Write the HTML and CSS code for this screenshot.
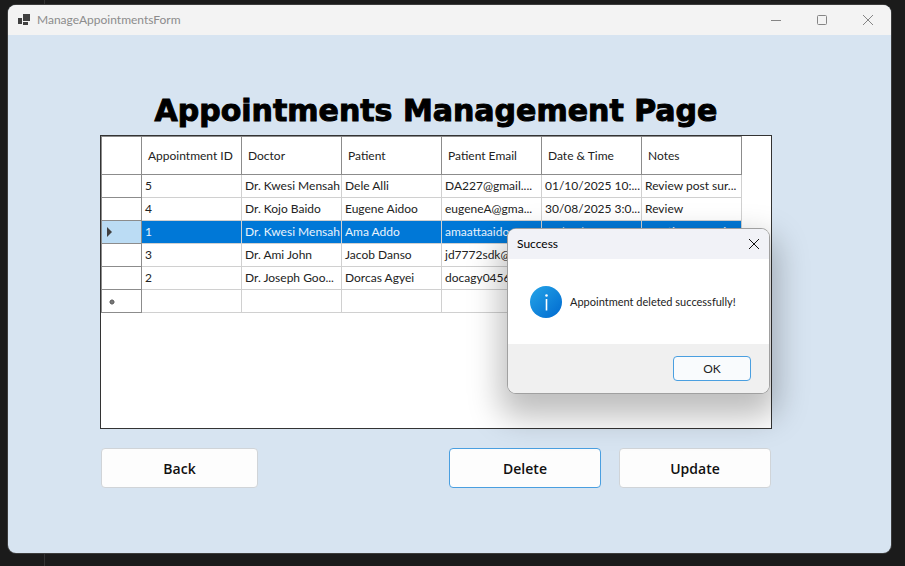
FILE: index.html
```html
<!DOCTYPE html>
<html lang="en">
<head>
<meta charset="utf-8">
<title>ManageAppointmentsForm</title>
<link rel="stylesheet" href="styles.css">
</head>
<body>
<div class="window">
  <header class="titlebar">
    <svg class="app-icon" viewBox="0 0 12 12" aria-hidden="true"><path d="M0 4h4v6H0zM5 0h7v7H5zM5 8h5v3H5z"/></svg>
    <span class="window-title">ManageAppointmentsForm</span>
    <div class="controls">
      <button class="control" aria-label="Minimize"><svg viewBox="0 0 12 12"><path d="M1 6.500h10"/></svg></button>
      <button class="control" aria-label="Maximize"><svg viewBox="0 0 12 12"><rect x="1.500" y="1.500" width="9" height="9" rx="1"/></svg></button>
      <button class="control" aria-label="Close"><svg viewBox="0 0 12 12"><path d="M1 1l10 10M11 1L1 11"/></svg></button>
    </div>
  </header>
  <main class="form">
    <h1 class="heading">Appointments Management Page</h1>
    <div class="grid-box">
      <table class="grid">
        <colgroup><col class="col-marker"><col class="col"><col class="col"><col class="col"><col class="col"><col class="col"><col class="col"></colgroup>
        <thead>
          <tr><td></td><th scope="col">Appointment ID</th><th scope="col">Doctor</th><th scope="col">Patient</th><th scope="col">Patient Email</th><th scope="col">Date &amp; Time</th><th scope="col">Notes</th></tr>
        </thead>
        <tbody>
          <tr><td></td><td>5</td><td>Dr. Kwesi Mensah</td><td>Dele Alli</td><td>DA227@gmail....</td><td>01/10/2025 10:...</td><td>Review post sur...</td></tr>
          <tr><td></td><td>4</td><td>Dr. Kojo Baido</td><td>Eugene Aidoo</td><td>eugeneA@gma...</td><td>30/08/2025 3:0...</td><td>Review</td></tr>
          <tr class="selected"><td><svg class="marker" viewBox="0 0 12 12" aria-hidden="true"><path d="M2 1l5 5-5 5z"/></svg></td><td>1</td><td>Dr. Kwesi Mensah</td><td>Ama Addo</td><td>amaattaaidoo...</td><td>26/08/2025 1:5...</td><td>Inpatient exami...</td></tr>
          <tr><td></td><td>3</td><td>Dr. Ami John</td><td>Jacob Danso</td><td>jd7772sdk@...</td><td></td><td></td></tr>
          <tr><td></td><td>2</td><td>Dr. Joseph Goo...</td><td>Dorcas Agyei</td><td>docagy0456...</td><td></td><td></td></tr>
          <tr><td><svg class="marker" viewBox="0 0 12 12" aria-hidden="true"><circle cx="7" cy="7" r="2"/><path class="rays" d="M7 4v6M4 7h6M5 5l4 4M9 5L5 9"/></svg></td><td></td><td></td><td></td><td></td><td></td><td></td></tr>
        </tbody>
      </table>
    </div>
    <div class="actions">
      <button class="action back">Back</button>
      <button class="action focused">Delete</button>
      <button class="action">Update</button>
    </div>
  </main>
  <section class="dialog" role="dialog" aria-labelledby="dialog-title">
    <header class="dialog-bar">
      <span id="dialog-title">Success</span>
      <button class="dialog-close" aria-label="Close"><svg viewBox="0 0 12 12"><path d="M1 1l10 10M11 1L1 11"/></svg></button>
    </header>
    <div class="dialog-body">
      <svg class="info" viewBox="0 0 32 32" aria-hidden="true">
        <defs><linearGradient id="blue" x1="0" y1="0" x2="1" y2="1"><stop offset="0" stop-color="#25a5e8"/><stop offset="1" stop-color="#0069cf"/></linearGradient></defs>
        <circle cx="16" cy="16" r="16" fill="url(#blue)"/>
        <circle cx="16.500" cy="9.500" r="1.300" fill="#fff"/><path d="M16.500 13v11.500" stroke="#fff" stroke-width="1.600"/>
      </svg>
      <p class="message">Appointment deleted successfully!</p>
    </div>
    <footer class="dialog-footer"><button class="ok">OK</button></footer>
  </section>
</div>
</body>
</html>
```
FILE: styles.css
```css
* { box-sizing: border-box; }
body {
  margin: 0;
  min-height: 100vh;
  display: flex;
  padding: 5px 14px 13px 8px;
  background: linear-gradient(#333, #333) 44px 0 / 1px 100% no-repeat #1b1b1b;
  font-family: Lato, "Open Sans", sans-serif;
  font-size: 12px;
  line-height: 16px;
  color: #222;
}
button { font-family: inherit; margin: 0; padding: 0; }
.window {
  position: relative;
  flex: 1;
  display: flex;
  flex-direction: column;
  border-radius: 8px;
  background: #d7e4f1;
  box-shadow: 0 0 0 1px #3c3c3c;
}
.titlebar {
  display: flex;
  align-items: center;
  height: 30px;
  padding-left: 10px;
  background: #f3f3f3;
  border-radius: 8px 8px 0 0;
  color: #8c8c8c;
}
.app-icon { width: 12px; height: 12px; margin-right: 7px; fill: #404040; }
.controls { display: flex; margin-left: auto; }
.control {
  width: 46px;
  height: 28px;
  display: flex;
  align-items: center;
  justify-content: center;
  border: 0;
  background: none;
}
.control svg, .dialog-close svg { width: 12px; height: 12px; fill: none; stroke: #858585; }
.form { flex: 1; padding: 56px 119px 0 92px; }
.heading {
  margin: 0;
  height: 44px;
  font-family: "DejaVu Sans", sans-serif;
  font-size: 30px;
  line-height: 40px;
  font-weight: 700;
  text-align: center;
  white-space: nowrap;
  color: #000;
  -webkit-text-stroke: 1px #000;
}
.grid-box { height: 294px; border: 1px solid #333; background: #fff; }
.grid {
  width: 641px;
  table-layout: fixed;
  border-collapse: separate;
  border-spacing: 0;
  border: solid #8c8c8c;
  border-width: 1px 0 0 1px;
}
.col-marker { width: 40px; }
.col { width: 100px; }
.grid th, .grid td {
  padding: 0 0 0 3px;
  border: solid #d0d0d0;
  border-width: 0 1px 1px 0;
  font-weight: 400;
  text-align: left;
  white-space: nowrap;
  overflow: hidden;
}
.grid thead th, .grid thead td { height: 38px; padding-left: 6px; border-color: #8c8c8c; }
.grid tbody tr { height: 23px; }
.grid tbody td:first-child { border-color: #8c8c8c; }
.grid .selected td { background: #0078d7; color: #e9f3fc; }
.grid .selected td:first-child { background: #bbdcf4; }
.marker { display: block; width: 12px; height: 12px; fill: #404040; }
.rays { stroke: #777; stroke-width: 1; }
.actions { display: flex; gap: 18px; padding: 19px 1px 0; }
.action {
  width: 152px;
  height: 40px;
  border: 1px solid #d0d4d8;
  border-radius: 4px;
  background: #fdfdfd;
  color: #111;
  font-family: "Open Sans", sans-serif;
  font-size: 14px;
  font-weight: 600;
}
.back { width: 157px; margin-right: auto; }
.focused { border-color: #4a9fe0; }
.dialog {
  position: absolute;
  left: 500px;
  top: 224px;
  width: 261px;
  border-radius: 8px;
  overflow: hidden;
  background: #fff;
  box-shadow: 0 0 0 1px #a0a0a0, 0 16px 32px 8px rgba(0, 0, 0, 0.26);
}
.dialog-bar {
  display: flex;
  align-items: center;
  justify-content: space-between;
  height: 30px;
  padding-left: 9px;
  background: #f1f2f7;
  color: #000;
}
.dialog-close {
  width: 30px;
  height: 28px;
  display: flex;
  align-items: center;
  justify-content: center;
  border: 0;
  background: none;
}
.dialog-close svg { stroke: #111; }
.dialog-body { display: flex; align-items: center; gap: 8px; height: 85px; padding-left: 22px; }
.info { width: 32px; height: 32px; }
.message { margin: 0; font-size: 11px; white-space: nowrap; }
.dialog-footer { display: flex; justify-content: flex-end; padding: 12px 18px; background: #f0f0f0; }
.ok {
  width: 78px;
  height: 25px;
  border: 1px solid #4a9fe0;
  border-radius: 4px;
  background: #f9fbfd;
  color: #222;
  font-size: 12px;
}
```
